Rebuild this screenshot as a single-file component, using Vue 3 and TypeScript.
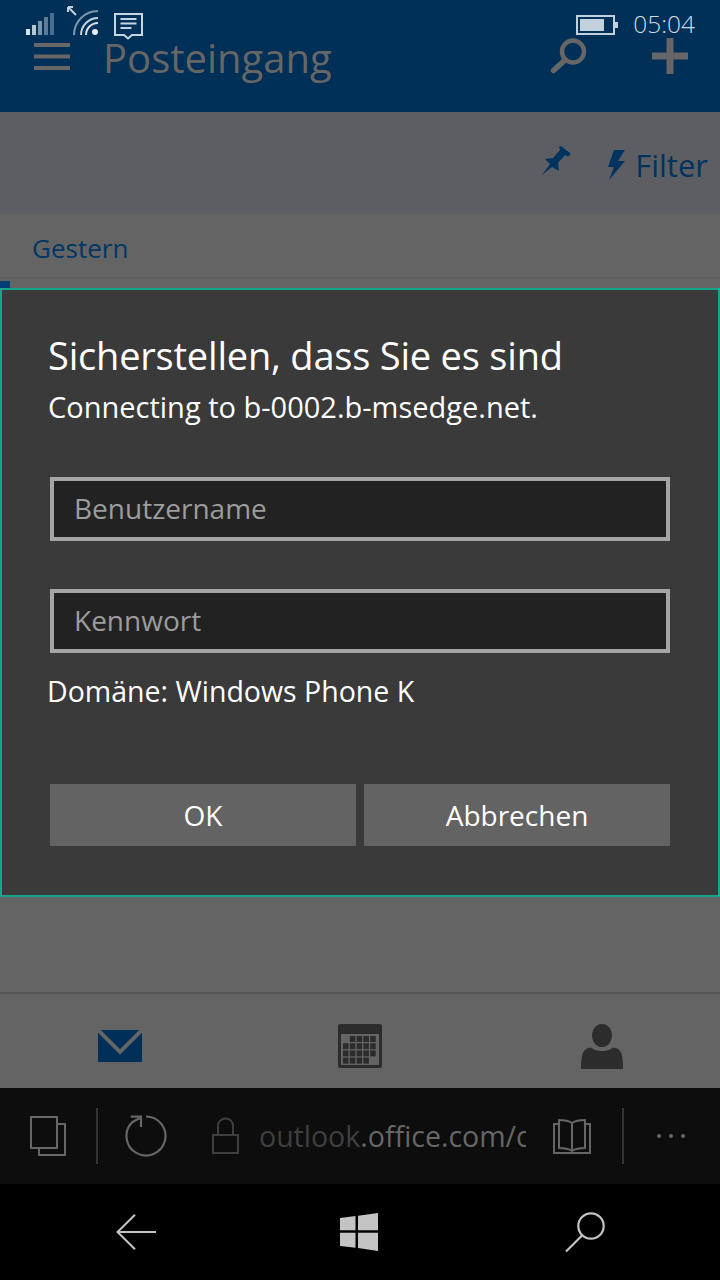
<template>
  <div class="phone">
    <header class="app-header">
      <svg class="burger" width="36" height="27" viewBox="0 0 36 27"><path d="M0 2h36M0 13.500h36M0 25h36" stroke="#666" stroke-width="4"/></svg>
      <h1 class="app-title">Posteingang</h1>
      <svg class="head-search" width="38" height="38" viewBox="0 0 38 38" fill="none" stroke="#666"><circle cx="23" cy="14.500" r="11" stroke-width="4.500"/><path d="M15 23 3.500 33.500" stroke-width="5.500" stroke-linecap="round"/></svg>
      <svg class="head-plus" width="36" height="36" viewBox="0 0 36 36"><path d="M14.500 0h7v14.500H36v7H21.500V36h-7V21.500H0v-7h14.500z" fill="#666"/></svg>
    </header>

    <div class="status-bar">
      <svg class="st-signal" width="28" height="22" viewBox="0 0 28 22">
        <rect x="0" y="16" width="4" height="6" fill="#dbe4ec"/>
        <rect x="6" y="12" width="4" height="10" fill="#b5c6d4"/>
        <rect x="12" y="8" width="4" height="14" fill="#7a95ac"/>
        <rect x="18" y="4" width="4" height="18" fill="#5c7c97"/>
        <rect x="24" y="0" width="4" height="22" fill="#4a6e8c"/>
      </svg>
      <svg class="st-wifi" width="34" height="32" viewBox="0 0 34 32" fill="none">
        <path d="M2 2 10 10M2 2v5M2 2h5" stroke="#c4d2de" stroke-width="2"/>
        <path d="M8 30A24 24 0 0 1 32 6" stroke="#7d98ae" stroke-width="2"/>
        <path d="M15 30A17 17 0 0 1 32 13" stroke="#c4d2de" stroke-width="2"/>
        <path d="M20 30A12 12 0 0 1 32 18" stroke="#dbe4ec" stroke-width="2"/>
        <circle cx="29" cy="27" r="3" fill="#e6edf2"/>
      </svg>
      <svg class="st-msg" width="30" height="27" viewBox="0 0 30 27" fill="none" stroke="#c8d6e1">
        <path d="M1 1h27v21H18l-4 3.500L10 22H1z" stroke-width="2"/>
        <path d="M6.500 6h16M6.500 10.500h16M6.500 15h11" stroke-width="2"/>
      </svg>
      <div class="st-right">
        <svg class="st-batt" width="42" height="20" viewBox="0 0 42 20" fill="none">
          <rect x="1" y="1" width="37" height="18" stroke="#c3d1dc" stroke-width="2"/>
          <rect x="4" y="4" width="24" height="12" fill="#c3d1dc"/>
          <rect x="39" y="7" width="3" height="6" fill="#c3d1dc"/>
        </svg>
        <span class="st-time">05:04</span>
      </div>
    </div>

    <div class="filter-bar">
      <svg width="30" height="30" viewBox="0 0 30 30"><path d="M19 0 29 8l-3 2.500-3-1.500-7 8 1 8-7-4-10 8 8-11-5-5 8-1 7-8-1-3z" fill="#00335f"/></svg>
      <div class="filter-btn">
        <svg width="18" height="30" viewBox="0 0 18 30"><path d="M6 0h11l-7 11h7L1 30l5-13H0z" fill="#00335f"/></svg>
        <span>Filter</span>
      </div>
    </div>

    <div class="date-row">Gestern</div>
    <div class="mail-area"><div class="unread-mark"></div></div>

    <nav class="tab-bar">
      <svg width="44" height="32" viewBox="0 0 44 32"><path d="M0 0h44v32H0z" fill="#00305a"/><path d="M0 0 22 22 44 0" fill="none" stroke="#646464" stroke-width="4"/></svg>
      <svg width="44" height="44" viewBox="0 0 44 44">
        <rect width="44" height="44" rx="2" fill="#2c2c2c"/>
        <rect x="3" y="10" width="38" height="31" fill="#646464"/>
        <g fill="#2c2c2c">
          <rect v-for="c in calCells" :key="c.id" :x="c.x" :y="c.y" width="5.500" height="6"/>
        </g>
      </svg>
      <svg class="tab-person" width="42" height="45" viewBox="0 0 42 45"><ellipse cx="21" cy="11.500" rx="10" ry="11.500" fill="#2c2c2c"/><path d="M0 45c0-9 1-16 3-18 2-3 6-4 8-3 3 4 17 4 20 0 2-1 6 0 8 3 2 2 3 9 3 18z" fill="#2c2c2c"/></svg>
    </nav>

    <div class="browser-bar">
      <svg class="b-icon" width="36" height="40" viewBox="0 0 36 40" fill="none" stroke="#666" stroke-width="2"><rect x="1" y="1" width="26" height="31"/><path d="M28 8h7v31H9v-7"/></svg>
      <div class="b-sep"></div>
      <svg class="b-refresh" width="42" height="42" viewBox="0 0 42 42" fill="none" stroke="#666" stroke-width="2.200"><path d="M21 1.500A19.500 19.500 0 1 1 7.200 7.200L15 3"/><path d="M5.700 1.700H16V12"/></svg>
      <svg class="b-lock" width="28" height="38" viewBox="0 0 28 38" fill="none" stroke="#3f3f3f" stroke-width="2"><rect x="1" y="18" width="25" height="18"/><path d="M6 18V9c0-10 15-10 15 0v9"/></svg>
      <div class="b-url"><span class="dim">outlook</span>.office.com/c</div>
      <svg class="b-book" width="38" height="36" viewBox="0 0 38 36" fill="none" stroke="#666" stroke-width="2"><path d="M6 6H1v29h36V6h-5"/><path d="M19 33V5c-3-2-8-3-13-3v28c5 0 10 1 13 3 3-2 8-3 13-3V2c-5 0-10 1-13 3"/></svg>
      <div class="b-sep b-sep-r"></div>
      <div class="b-dots"><i></i><i></i><i></i></div>
    </div>

    <div class="nav-bar">
      <svg width="40" height="36" viewBox="0 0 40 36" fill="none" stroke="#c4c4c4" stroke-width="2"><path d="M19 .7 1.500 18 19 35.300M1.500 18H40"/></svg>
      <svg class="nav-home" width="38" height="38" viewBox="0 0 38 38" fill="#c4c4c4"><path d="M0 5 15.500 3v14.300H0zM18 2.700 38 0v17.300H18zM0 19.700h15.500v15L0 33zM18 19.700h20V38l-20-3z"/></svg>
      <svg width="40" height="40" viewBox="0 0 40 40" fill="none" stroke="#c4c4c4" stroke-width="2.200"><circle cx="26" cy="14" r="12.700"/><path d="M17.500 23 1 39.500"/></svg>
    </div>

    <section class="dialog">
      <h2 class="dlg-title">Sicherstellen, dass Sie es sind</h2>
      <p class="dlg-sub">Connecting to b-0002.b-msedge.net.</p>
      <div class="dlg-field">Benutzername</div>
      <div class="dlg-field dlg-field-pw">Kennwort</div>
      <p class="dlg-domain">Domäne: Windows Phone K</p>
      <div class="dlg-actions">
        <button class="dlg-btn">OK</button>
        <button class="dlg-btn">Abbrechen</button>
      </div>
    </section>
  </div>
</template>

<script setup lang="ts">
// calendar month grid, first row starts at the 2nd cell and last one stops at 4
const calCells: { id: number; x: number; y: number }[] = [];
for (let r = 0; r < 4; r++) {
  for (let c = 0; c < 5; c++) {
    if ((r === 0 && c === 0) || (r === 3 && c === 4)) continue;
    calCells.push({ id: r * 5 + c, x: 5 + c * 6.8, y: 12 + r * 7.2 });
  }
}
</script>

<style>
html, body {
  margin: 0;
  background: #000;
}
</style>

<style scoped>
.phone {
  position: relative;
  width: 720px;
  height: 1280px;
  overflow: hidden;
  display: flex;
  flex-direction: column;
  background: #646464;
  font-family: "Open Sans", "Noto Sans", sans-serif;
  color: #fff;
}

.app-header {
  height: 112px;
  flex-shrink: 0;
  box-sizing: border-box;
  background: #002f57;
  display: flex;
  align-items: flex-start;
  padding: 0 32px 0 34px;
}

.burger {
  margin-top: 43px;
}

.app-title {
  margin: 34px auto 0 33px;
  font-size: 40px;
  line-height: 48px;
  font-weight: 400;
  color: #666;
}

.head-search {
  margin: 37px 64px 0 0;
}

.head-plus {
  margin-top: 38px;
}

.status-bar {
  position: absolute;
  top: 0;
  left: 0;
  right: 0;
  height: 40px;
}

.st-signal {
  position: absolute;
  left: 26px;
  top: 13px;
}

.st-wifi {
  position: absolute;
  left: 66px;
  top: 5px;
}

.st-msg {
  position: absolute;
  left: 114px;
  top: 13px;
}

.st-right {
  position: absolute;
  right: 25px;
  top: 8px;
  display: flex;
  align-items: center;
  gap: 15px;
}

.st-batt {
  margin-top: 1px;
}

.st-time {
  font-size: 24.500px;
  line-height: 32px;
  color: #cfdbe4;
  font-weight: 300;
}

.filter-bar {
  height: 102px;
  flex-shrink: 0;
  box-sizing: border-box;
  background: #5d5e63;
  display: flex;
  align-items: center;
  justify-content: flex-end;
  gap: 36px;
  padding: 4px 12px 0 0;
}

.filter-bar > svg {
  margin-bottom: 8px;
}

.filter-btn {
  display: flex;
  align-items: center;
  gap: 9px;
  font-size: 31px;
  color: #00335f;
}

.date-row {
  height: 64px;
  flex-shrink: 0;
  box-sizing: border-box;
  padding: 16px 0 0 32px;
  background: #646464;
  border-bottom: 1px solid #5e5e5e;
  color: #003763;
  font-size: 26px;
  line-height: 36px;
}

.mail-area {
  flex: 1;
  border-bottom: 2px solid #555;
}

.unread-mark {
  width: 10px;
  height: 10px;
  margin-top: 3px;
  background: #003e73;
}

.tab-bar {
  height: 94px;
  flex-shrink: 0;
  display: grid;
  grid-template-columns: repeat(3, 1fr);
  align-items: center;
  justify-items: center;
  box-sizing: border-box;
  padding-top: 10px;
  background: #646464;
}

.tab-person {
  margin-left: 3px;
}

.browser-bar {
  height: 96px;
  flex-shrink: 0;
  box-sizing: border-box;
  background: #0d0d0d;
  display: flex;
  align-items: center;
  padding-left: 30px;
}

.b-icon {
  flex-shrink: 0;
}

.b-sep {
  width: 2px;
  height: 56px;
  flex-shrink: 0;
  margin-left: 30px;
  background: #333;
}

.b-refresh {
  margin-left: 27px;
  flex-shrink: 0;
}

.b-lock {
  margin-left: 45px;
  flex-shrink: 0;
}

.b-url {
  width: 267px;
  margin-left: 19px;
  overflow: hidden;
  white-space: nowrap;
  font-size: 28.500px;
  color: #666;
  flex-shrink: 0;
}

.dim {
  color: #3f3f3f;
}

.b-book {
  margin-left: 27px;
  flex-shrink: 0;
}

.b-sep-r {
  margin-left: 31px;
}

.b-dots {
  display: flex;
  gap: 8px;
  margin-left: 33px;
}

.b-dots i {
  width: 4px;
  height: 4px;
  border-radius: 50%;
  background: #666;
}

.nav-bar {
  height: 96px;
  flex-shrink: 0;
  box-sizing: border-box;
  background: #000;
  padding: 0 115px 0 116px;
  display: flex;
  align-items: center;
  justify-content: space-between;
}

.nav-home {
  margin-right: 3px;
}

.dialog {
  position: absolute;
  top: 288px;
  left: 0;
  width: 720px;
  height: 609px;
  box-sizing: border-box;
  border: 2px solid #12a78c;
  background: #3a3a3a;
  padding: 40px 48px 0;
  display: flex;
  flex-direction: column;
}

.dlg-title {
  margin: 0 0 0 -2px;
  font-size: 38px;
  line-height: 50px;
  font-weight: 400;
  letter-spacing: -0.2px;
}

.dlg-sub {
  margin: 8px 0 0 -2px;
  font-size: 29px;
  line-height: 38px;
}

.dlg-field {
  height: 64px;
  box-sizing: border-box;
  margin-top: 51px;
  border: 4px solid #a5a5a5;
  background: #222;
  color: #9c9c9c;
  font-size: 28px;
  line-height: 54px;
  padding-left: 20px;
}

.dlg-field-pw {
  margin-top: 48px;
}

.dlg-domain {
  margin: 18px 0 0 -3px;
  font-size: 28.500px;
  line-height: 40px;
}

.dlg-actions {
  display: flex;
  gap: 8px;
  margin-top: 73px;
}

.dlg-btn {
  flex: 1;
  height: 62px;
  border: 0;
  padding: 0;
  background: #636363;
  color: #fff;
  font: inherit;
  font-size: 28px;
}
</style>
